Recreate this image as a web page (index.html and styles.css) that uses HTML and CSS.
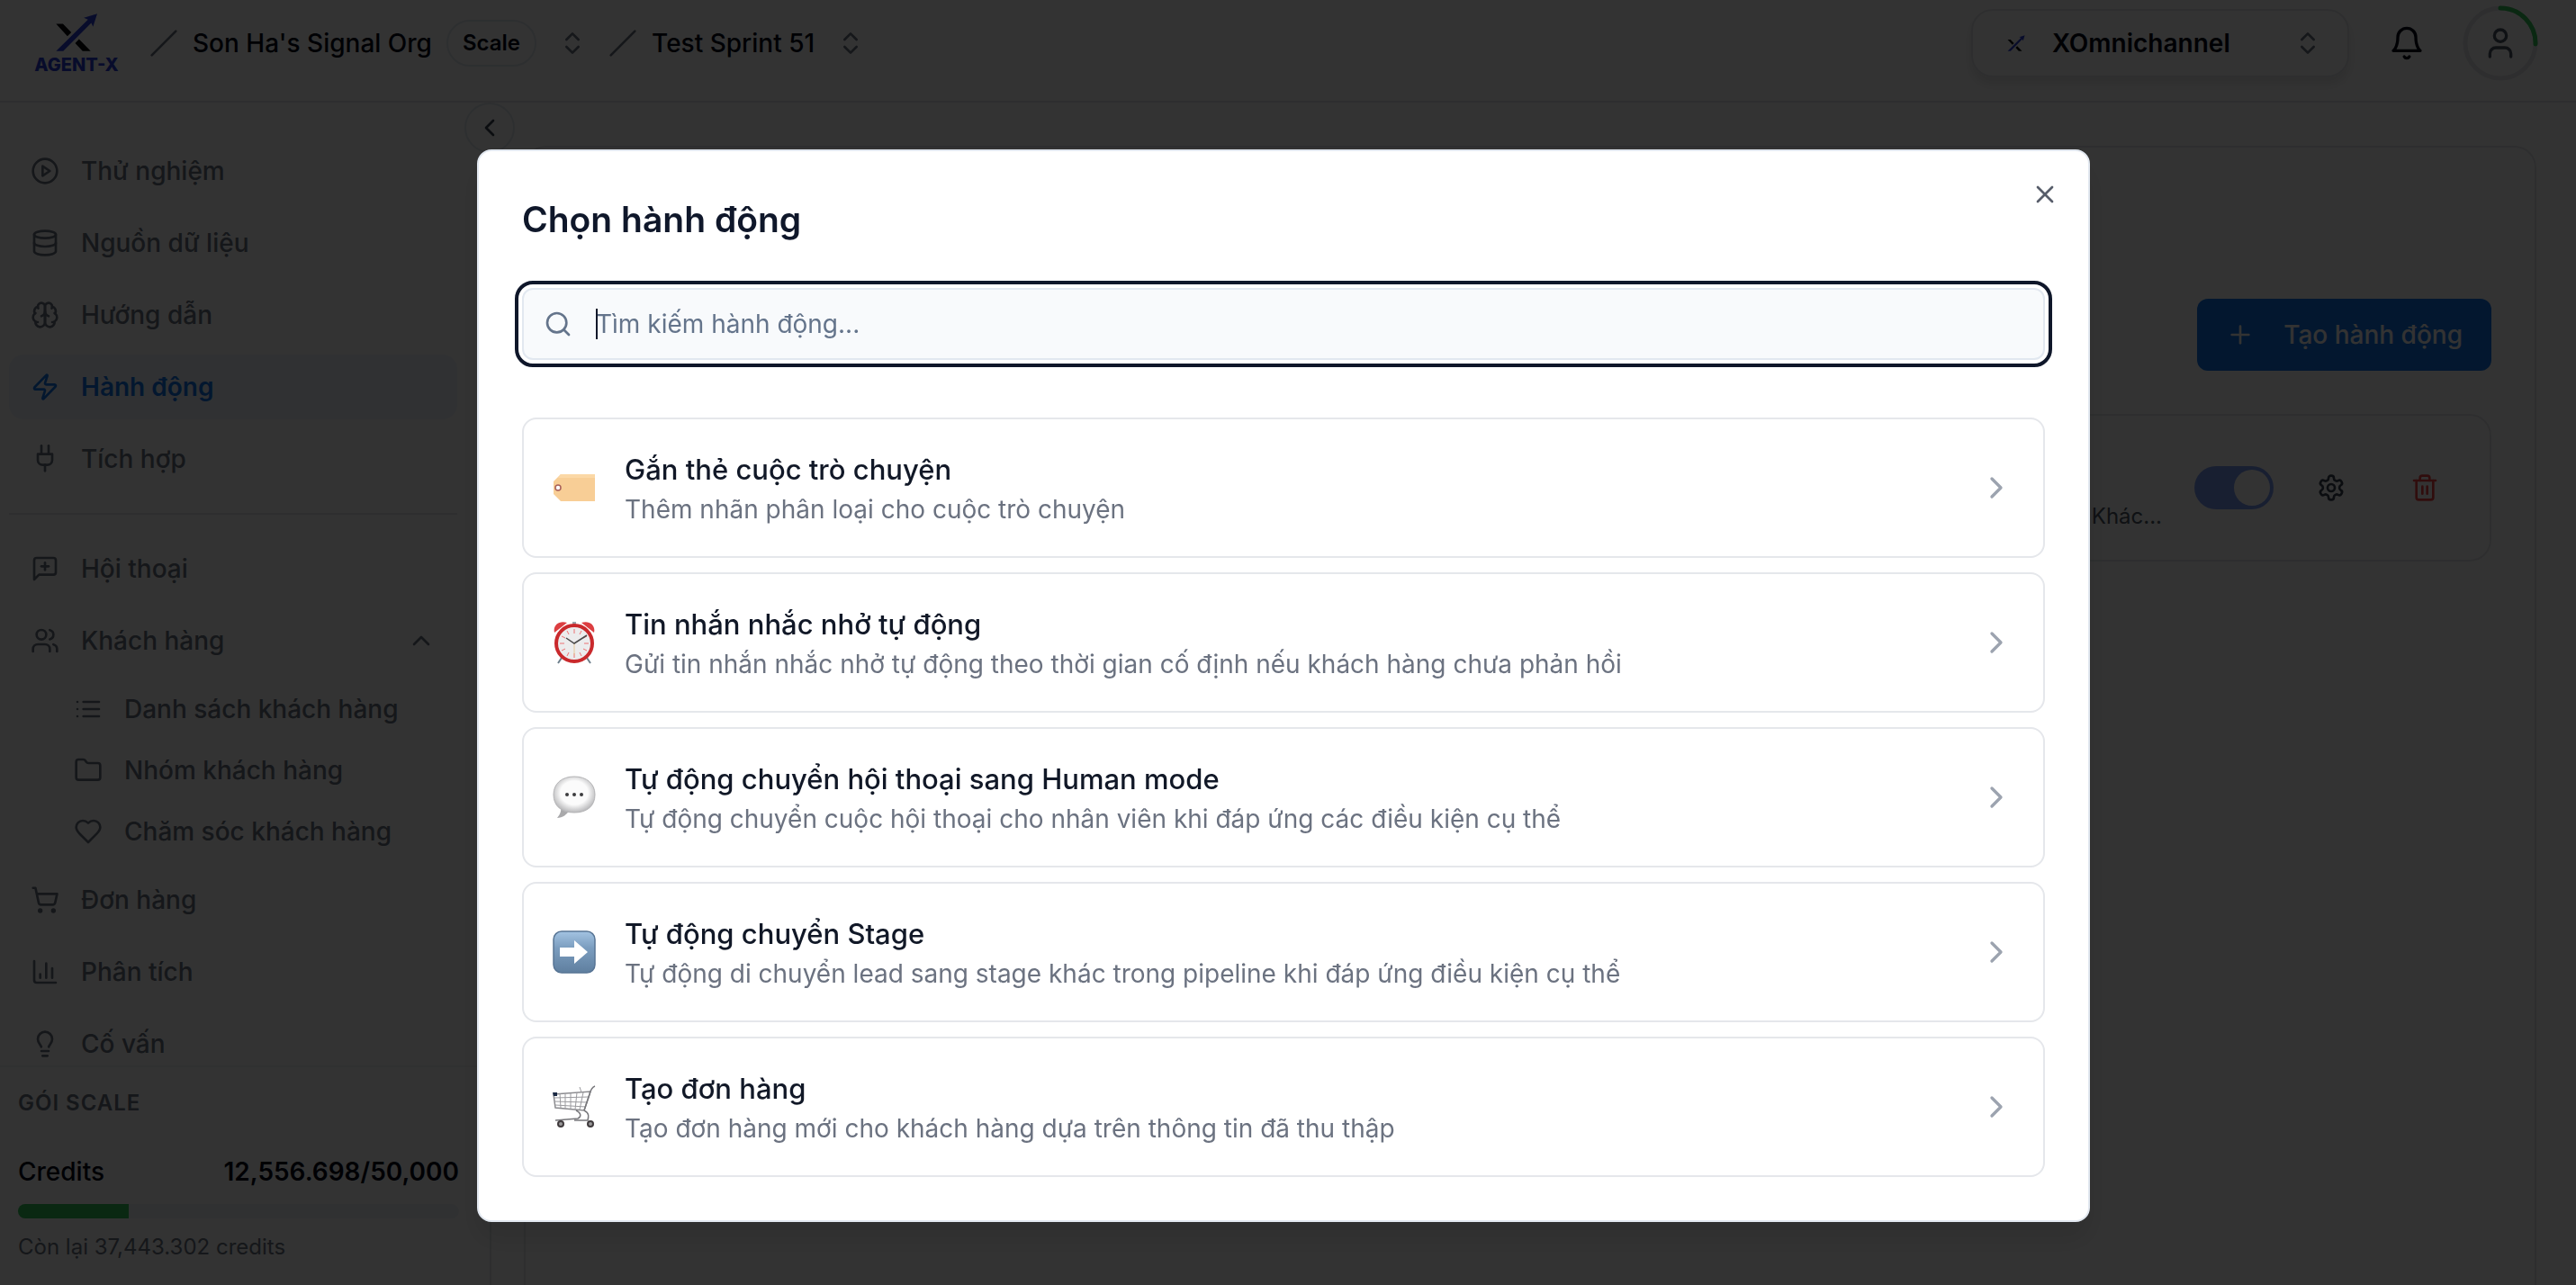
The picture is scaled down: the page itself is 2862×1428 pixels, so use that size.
FILE: index.html
```
<!DOCTYPE html>
<html lang="vi">
<head>
    <meta charset="UTF-8">
    <meta name="viewport" content="width=device-width, initial-scale=1.0">
    <title>Agent-X - Hành động</title>
    <link rel="stylesheet" href="styles.css">
</head>
<body>
    <!-- icon dùng chung -->
    <svg class="sprite" aria-hidden="true">
        <symbol id="i-x-logo" viewBox="105 45 145 132">
            <path d="M109 82h23l28 29-13 13zM186 134l39 40h-27l-25-27z" fill="#06080c"/>
            <path d="M109 174l107-106-14-6 45-14-14 44-6-13-94 95z" fill="#2b3fd6"/>
        </symbol>
        <symbol id="i-slash" viewBox="0 0 24 24"><path d="M22 2 2 22"/></symbol>
        <symbol id="i-updown" viewBox="0 0 24 24"><path d="m7 15 5 5 5-5"/><path d="m7 9 5-5 5 5"/></symbol>
        <symbol id="i-bell" viewBox="0 0 24 24"><path d="M6 8a6 6 0 0 1 12 0c0 7 3 9 3 9H3s3-2 3-9"/><path d="M10.3 21a1.94 1.94 0 0 0 3.4 0"/></symbol>
        <symbol id="i-user" viewBox="0 0 24 24"><path d="M19 21v-2a4 4 0 0 0-4-4H9a4 4 0 0 0-4 4v2"/><circle cx="12" cy="7" r="4"/></symbol>
        <symbol id="i-left" viewBox="0 0 24 24"><path d="m15 18-6-6 6-6"/></symbol>
        <symbol id="i-right" viewBox="0 0 24 24"><path d="m9 18 6-6-6-6"/></symbol>
        <symbol id="i-up" viewBox="0 0 24 24"><path d="m18 15-6-6-6 6"/></symbol>
        <symbol id="i-play" viewBox="0 0 24 24"><circle cx="12" cy="12" r="10"/><path d="m10 8 6 4-6 4z"/></symbol>
        <symbol id="i-database" viewBox="0 0 24 24"><ellipse cx="12" cy="5" rx="9" ry="3"/><path d="M3 5v14a9 3 0 0 0 18 0V5"/><path d="M3 12a9 3 0 0 0 18 0"/></symbol>
        <symbol id="i-brain" viewBox="0 0 24 24"><path d="M12 5a3 3 0 1 0-5.997.125 4 4 0 0 0-2.526 5.77 4 4 0 0 0 .556 6.588A4 4 0 1 0 12 18Z"/><path d="M12 5a3 3 0 1 1 5.997.125 4 4 0 0 1 2.526 5.77 4 4 0 0 1-.556 6.588A4 4 0 1 1 12 18Z"/><path d="M15 13a4.5 4.5 0 0 1-3-4 4.5 4.5 0 0 1-3 4"/><path d="M17.599 6.5a3 3 0 0 0 .399-1.375"/><path d="M6.003 5.125A3 3 0 0 0 6.401 6.5"/><path d="M3.477 10.896a4 4 0 0 1 .585-.396"/><path d="M19.938 10.5a4 4 0 0 1 .585.396"/><path d="M6 18a4 4 0 0 1-1.967-.516"/><path d="M19.967 17.484A4 4 0 0 1 18 18"/></symbol>
        <symbol id="i-zap" viewBox="0 0 24 24"><path d="M4 14a1 1 0 0 1-.78-1.63l9.9-10.2a.5.5 0 0 1 .86.46l-1.92 6.02A1 1 0 0 0 13 10h7a1 1 0 0 1 .78 1.63l-9.9 10.2a.5.5 0 0 1-.86-.46l1.92-6.02A1 1 0 0 0 11 14z"/></symbol>
        <symbol id="i-plug" viewBox="0 0 24 24"><path d="M12 22v-5"/><path d="M9 8V1"/><path d="M15 8V1"/><path d="M18 8v5a4 4 0 0 1-4 4h-4a4 4 0 0 1-4-4V8Z"/></symbol>
        <symbol id="i-message" viewBox="0 0 24 24"><path d="M21 15a2 2 0 0 1-2 2H7l-4 4V5a2 2 0 0 1 2-2h14a2 2 0 0 1 2 2z"/><path d="M12 7v6"/><path d="M9 10h6"/></symbol>
        <symbol id="i-users" viewBox="0 0 24 24"><path d="M16 21v-2a4 4 0 0 0-4-4H6a4 4 0 0 0-4 4v2"/><circle cx="9" cy="7" r="4"/><path d="M22 21v-2a4 4 0 0 0-3-3.87"/><path d="M16 3.13a4 4 0 0 1 0 7.75"/></symbol>
        <symbol id="i-list" viewBox="0 0 24 24"><path d="M3 12h.01"/><path d="M3 18h.01"/><path d="M3 6h.01"/><path d="M8 12h13"/><path d="M8 18h13"/><path d="M8 6h13"/></symbol>
        <symbol id="i-folder" viewBox="0 0 24 24"><path d="M20 20a2 2 0 0 0 2-2V8a2 2 0 0 0-2-2h-7.9a2 2 0 0 1-1.69-.9L9.6 3.9A2 2 0 0 0 7.93 3H4a2 2 0 0 0-2 2v13a2 2 0 0 0 2 2Z"/></symbol>
        <symbol id="i-heart" viewBox="0 0 24 24"><path d="M19 14c1.49-1.46 3-3.21 3-5.5A5.5 5.5 0 0 0 16.5 3c-1.76 0-3 .5-4.5 2-1.5-1.5-2.74-2-4.5-2A5.5 5.5 0 0 0 2 8.5c0 2.3 1.5 4.05 3 5.5l7 7Z"/></symbol>
        <symbol id="i-cart" viewBox="0 0 24 24"><circle cx="8" cy="21" r="1"/><circle cx="19" cy="21" r="1"/><path d="M2.05 2.05h2l2.66 12.42a2 2 0 0 0 2 1.58h9.78a2 2 0 0 0 1.95-1.57l1.65-7.43H5.12"/></symbol>
        <symbol id="i-chart" viewBox="0 0 24 24"><path d="M3 3v16a2 2 0 0 0 2 2h16"/><path d="M18 17V9"/><path d="M13 17V5"/><path d="M8 17v-3"/></symbol>
        <symbol id="i-bulb" viewBox="0 0 24 24"><path d="M9 18h6"/><path d="M10 22h4"/><path d="M8.9 14.5C8 12.5 6 11 6 8a6 6 0 0 1 12 0c0 3-2 4.5-2.9 6.5"/></symbol>
        <symbol id="i-plus" viewBox="0 0 24 24"><path d="M5 12h14"/><path d="M12 5v14"/></symbol>
        <symbol id="i-gear" viewBox="0 0 24 24"><path d="M12.22 2h-.44a2 2 0 0 0-2 2v.18a2 2 0 0 1-1 1.73l-.43.25a2 2 0 0 1-2 0l-.15-.08a2 2 0 0 0-2.73.73l-.22.38a2 2 0 0 0 .73 2.73l.15.1a2 2 0 0 1 1 1.72v.51a2 2 0 0 1-1 1.74l-.15.09a2 2 0 0 0-.73 2.73l.22.38a2 2 0 0 0 2.73.73l.15-.08a2 2 0 0 1 2 0l.43.25a2 2 0 0 1 1 1.73V20a2 2 0 0 0 2 2h.44a2 2 0 0 0 2-2v-.18a2 2 0 0 1 1-1.73l.43-.25a2 2 0 0 1 2 0l.15.08a2 2 0 0 0 2.73-.73l.22-.39a2 2 0 0 0-.73-2.73l-.15-.08a2 2 0 0 1-1-1.74v-.5a2 2 0 0 1 1-1.74l.15-.09a2 2 0 0 0 .73-2.73l-.22-.38a2 2 0 0 0-2.73-.73l-.15.08a2 2 0 0 1-2 0l-.43-.25a2 2 0 0 1-1-1.73V4a2 2 0 0 0-2-2z"/><circle cx="12" cy="12" r="3"/></symbol>
        <symbol id="i-trash" viewBox="0 0 24 24"><path d="M3 6h18"/><path d="M19 6v14a2 2 0 0 1-2 2H7a2 2 0 0 1-2-2V6"/><path d="M8 6V4a2 2 0 0 1 2-2h4a2 2 0 0 1 2 2v2"/><path d="M10 11v6"/><path d="M14 11v6"/></symbol>
        <symbol id="i-search" viewBox="0 0 24 24"><circle cx="11" cy="11" r="8"/><path d="m21 21-4.3-4.3"/></symbol>
        <symbol id="i-close" viewBox="0 0 24 24"><path d="M18 6 6 18"/><path d="m6 6 12 12"/></symbol>
    </svg>

    <div class="app">
        <header class="header">
            <a href="#" class="logo">
                <svg class="logo-mark"><use href="#i-x-logo"/></svg>
                <span class="logo-text">AGENT-X</span>
            </a>
            <svg class="icon muted"><use href="#i-slash"/></svg>
            <button class="switcher">Son Ha's Signal Org <span class="badge">Scale</span></button>
            <svg class="icon muted updown"><use href="#i-updown"/></svg>
            <svg class="icon muted"><use href="#i-slash"/></svg>
            <button class="switcher">Test Sprint 51</button>
            <svg class="icon muted updown"><use href="#i-updown"/></svg>

            <div class="header-right">
                <button class="channel">
                    <svg class="channel-logo"><use href="#i-x-logo"/></svg>
                    <span>XOmnichannel</span>
                    <svg class="icon muted"><use href="#i-updown"/></svg>
                </button>
                <button class="icon-button" aria-label="Thông báo"><svg class="icon large"><use href="#i-bell"/></svg></button>
                <button class="avatar" aria-label="Tài khoản">
                    <svg class="ring" viewBox="0 0 84 84">
                        <circle cx="42" cy="42" r="39" stroke="#e5e7eb"/>
                        <path d="M42 3a39 39 0 0 1 39 40" stroke="#34c759" stroke-linecap="round"/>
                    </svg>
                    <svg class="icon large"><use href="#i-user"/></svg>
                </button>
            </div>
        </header>

        <div class="body">
            <aside class="sidebar">
                <button class="collapse" aria-label="Thu gọn"><svg class="icon"><use href="#i-left"/></svg></button>
                <nav class="nav">
                    <a href="#" class="nav-item"><svg class="icon"><use href="#i-play"/></svg>Thử nghiệm</a>
                    <a href="#" class="nav-item"><svg class="icon"><use href="#i-database"/></svg>Nguồn dữ liệu</a>
                    <a href="#" class="nav-item"><svg class="icon"><use href="#i-brain"/></svg>Hướng dẫn</a>
                    <a href="#" class="nav-item active"><svg class="icon"><use href="#i-zap"/></svg>Hành động</a>
                    <a href="#" class="nav-item"><svg class="icon"><use href="#i-plug"/></svg>Tích hợp</a>
                    <hr>
                    <a href="#" class="nav-item"><svg class="icon"><use href="#i-message"/></svg>Hội thoại</a>
                    <a href="#" class="nav-item"><svg class="icon"><use href="#i-users"/></svg>Khách hàng<svg class="icon arrow"><use href="#i-up"/></svg></a>
                    <div class="subnav">
                        <a href="#" class="nav-item"><svg class="icon"><use href="#i-list"/></svg>Danh sách khách hàng</a>
                        <a href="#" class="nav-item"><svg class="icon"><use href="#i-folder"/></svg>Nhóm khách hàng</a>
                        <a href="#" class="nav-item"><svg class="icon"><use href="#i-heart"/></svg>Chăm sóc khách hàng</a>
                    </div>
                    <a href="#" class="nav-item"><svg class="icon"><use href="#i-cart"/></svg>Đơn hàng</a>
                    <a href="#" class="nav-item"><svg class="icon"><use href="#i-chart"/></svg>Phân tích</a>
                    <a href="#" class="nav-item"><svg class="icon"><use href="#i-bulb"/></svg>Cố vấn</a>
                </nav>
                <div class="plan">
                    <div class="plan-name">GÓI SCALE</div>
                    <div class="plan-row"><span>Credits</span><strong>12,556.698/50,000</strong></div>
                    <div class="bar"><div class="bar-fill" style="width: 25.1%"></div></div>
                    <div class="plan-left">Còn lại 37,443.302 credits</div>
                </div>
            </aside>

            <main class="main">
                <section class="panel">
                    <div class="toolbar">
                        <button class="create"><svg class="icon"><use href="#i-plus"/></svg>Tạo hành động</button>
                    </div>
                    <div class="rule">
                        <span class="rule-text">Khác...</span>
                        <input type="checkbox" class="toggle" aria-label="Bật hành động" checked>
                        <button class="icon-button rule-button" aria-label="Cài đặt"><svg class="icon"><use href="#i-gear"/></svg></button>
                        <button class="icon-button rule-button danger" aria-label="Xóa"><svg class="icon"><use href="#i-trash"/></svg></button>
                    </div>
                </section>
            </main>
        </div>
    </div>

    <div class="overlay">
        <div class="modal" role="dialog" aria-modal="true" aria-labelledby="modalTitle">
            <button class="close" aria-label="Đóng"><svg class="icon"><use href="#i-close"/></svg></button>
            <h2 id="modalTitle">Chọn hành động</h2>
            <div class="search">
                <svg class="icon"><use href="#i-search"/></svg>
                <input type="text" id="search" placeholder="Tìm kiếm hành động..." aria-label="Tìm kiếm hành động">
                <span class="caret"></span>
            </div>

            <div class="actions">
                <button class="action">
                    <svg class="emoji" viewBox="0 0 48 48">
                        <path d="M9 9h38v30H9l-8-8V17z" fill="#f8ce96"/>
                        <path d="M9 9h38v4H6z" fill="#fbd8a6"/>
                        <circle cx="6" cy="24" r="3" fill="#fff" stroke="#a9605a" stroke-width="1.5"/>
                    </svg>
                    <span class="action-text">
                        <span class="action-title">Gắn thẻ cuộc trò chuyện</span>
                        <span class="action-desc">Thêm nhãn phân loại cho cuộc trò chuyện</span>
                    </span>
                    <svg class="icon large chevron"><use href="#i-right"/></svg>
                </button>
                <button class="action">
                    <svg class="emoji" viewBox="0 0 48 48">
                        <path d="m10 41-4 6M38 41l4 6" stroke="#6d7f8c" stroke-width="2"/>
                        <path d="M24 1v5" stroke="#9aa4ab" stroke-width="4"/>
                        <path d="M2 13C0 5 7-1 16 2zM46 13C48 5 41-1 32 2z" fill="#dc3e41"/>
                        <circle cx="24" cy="25" r="20" fill="#ececed" stroke="#c9292c" stroke-width="4"/>
                        <path d="M24 9v5M24 36v5M8 25h5M35 25h5M16 11l2 4M32 11l-2 4M10 17l4 2M38 17l-4 2M10 33l4-2M38 33l-4-2M16 39l2-4M32 39l-2-4" stroke="#ec7274" stroke-width="1"/>
                        <path d="M24 25v13" stroke="#e5c89a" stroke-width="1"/>
                        <path d="m15 19 9 6 14-9" fill="none" stroke="#4a4a4a" stroke-width="1.5"/>
                    </svg>
                    <span class="action-text">
                        <span class="action-title">Tin nhắn nhắc nhở tự động</span>
                        <span class="action-desc">Gửi tin nhắn nhắc nhở tự động theo thời gian cố định nếu khách hàng chưa phản hồi</span>
                    </span>
                    <svg class="icon large chevron"><use href="#i-right"/></svg>
                </button>
                <button class="action">
                    <svg class="emoji" viewBox="0 0 48 48">
                        <defs>
                            <radialGradient id="bubble" cx=".5" cy=".45" r=".55"><stop offset=".6" stop-color="#fbfbfb"/><stop offset="1" stop-color="#b9b9bb"/></radialGradient>
                        </defs>
                        <path d="M9 34c1 6-1 9-4 13 6 0 11-4 14-9z" fill="#a9a9ab"/>
                        <path d="M24 1c14 0 23 8 23 20 0 13-9 20-23 20S1 34 1 21C1 9 10 1 24 1z" fill="url(#bubble)" stroke="#b5b5b7"/>
                        <circle cx="16" cy="21" r="2" fill="#3c3c3e"/><circle cx="24" cy="21" r="2" fill="#3c3c3e"/><circle cx="32" cy="21" r="2" fill="#3c3c3e"/>
                    </svg>
                    <span class="action-text">
                        <span class="action-title">Tự động chuyển hội thoại sang Human mode</span>
                        <span class="action-desc">Tự động chuyển cuộc hội thoại cho nhân viên khi đáp ứng các điều kiện cụ thể</span>
                    </span>
                    <svg class="icon large chevron"><use href="#i-right"/></svg>
                </button>
                <button class="action">
                    <svg class="emoji" viewBox="0 0 48 48">
                        <defs>
                            <linearGradient id="tile" x2="0" y2="1"><stop offset="0" stop-color="#a3c3e2"/><stop offset=".4" stop-color="#7b9dbf"/><stop offset="1" stop-color="#5f7f9f"/></linearGradient>
                        </defs>
                        <rect x="1" y="1" width="46" height="46" rx="9" fill="url(#tile)" stroke="#587595" stroke-width="1.5"/>
                        <path d="M8 19h16v-8l15 13-15 13v-8H8z" fill="#fff"/>
                    </svg>
                    <span class="action-text">
                        <span class="action-title">Tự động chuyển Stage</span>
                        <span class="action-desc">Tự động di chuyển lead sang stage khác trong pipeline khi đáp ứng điều kiện cụ thể</span>
                    </span>
                    <svg class="icon large chevron"><use href="#i-right"/></svg>
                </button>
                <button class="action">
                    <svg class="emoji" viewBox="0 0 48 48" fill="none">
                        <path d="m1 10 41-3-7 21-32-3z" stroke="#8a8a8e" stroke-width="1.5"/>
                        <path d="m2 14 38-1M2 18l37 1M3 22l34 2M8 9l1 16M14 9v17M20 9v17M27 8l-2 19M34 8l-4 19" stroke="#9b9b9f"/>
                        <path d="m30 2 2 6" stroke="#9b9b9f"/>
                        <path d="M47 1c-3 1-5 5-6 9l-6 18M26 28c6 3 6 7 2 9L3 39M35 28c6 3 5 7 4 11H24" stroke="#77777b" stroke-width="1.5"/>
                        <path d="M0 8h5v4H1z" fill="#1c2b45"/>
                        <circle cx="9" cy="43" r="3" fill="#999" stroke="#3f3a3c" stroke-width="2"/>
                        <circle cx="42" cy="43" r="3" fill="#999" stroke="#3f3a3c" stroke-width="2"/>
                    </svg>
                    <span class="action-text">
                        <span class="action-title">Tạo đơn hàng</span>
                        <span class="action-desc">Tạo đơn hàng mới cho khách hàng dựa trên thông tin đã thu thập</span>
                    </span>
                    <svg class="icon large chevron"><use href="#i-right"/></svg>
                </button>
            </div>
        </div>
    </div>
</body>
</html>
```
FILE: styles.css
```
* {
    box-sizing: border-box;
}

body {
    margin: 0;
    background-color: #fff;
    color: #020817;
    font-family: Inter, "Noto Sans", sans-serif;
    font-size: 28px;
    line-height: 40px;
    overflow: hidden;
}

button {
    padding: 0;
    border: none;
    background: none;
    color: inherit;
    font: inherit;
    cursor: pointer;
}

a {
    color: inherit;
    text-decoration: none;
}

.sprite {
    display: none;
}

.icon {
    flex: none;
    width: 32px;
    height: 32px;
    fill: none;
    stroke: currentColor;
    stroke-width: 2;
    stroke-linecap: round;
    stroke-linejoin: round;
}

.icon.large {
    width: 40px;
    height: 40px;
}

.muted {
    color: #6b7280;
}

.app {
    display: flex;
    flex-direction: column;
    height: 100vh;
}

/* header */
.header {
    display: flex;
    align-items: center;
    height: 114px;
    padding: 0 42px 16px 40px;
    border-bottom: 2px solid #e5e7eb;
    font-weight: 500;
}

.logo {
    display: flex;
    flex-direction: column;
    align-items: center;
    gap: 4px;
    width: 90px;
    margin-right: 36px;
}

.logo-mark {
    width: 48px;
    height: 44px;
}

.logo-text {
    color: #2b3fd6;
    font-size: 20px;
    font-weight: 800;
    line-height: 20px;
    white-space: nowrap;
}

.switcher {
    display: flex;
    align-items: center;
    gap: 16px;
    margin-left: 16px;
}

.badge {
    padding: 4px 16px;
    border: 2px solid #e2e8f0;
    border-radius: 26px;
    font-size: 24px;
    font-weight: 600;
}

.updown {
    margin: 0 24px;
}

.header-right {
    display: flex;
    align-items: center;
    margin-left: auto;
}

.channel {
    display: flex;
    align-items: center;
    width: 420px;
    height: 76px;
    margin-right: 44px;
    padding: 0 28px 0 38px;
    border: 2px solid #e5e7eb;
    border-radius: 24px;
    box-shadow: 0 8px 12px rgba(0, 0, 0, 0.1);
    font-weight: 600;
}

.channel-logo {
    width: 20px;
    height: 20px;
    margin-right: 30px;
}

.channel .icon {
    margin-left: auto;
}

.icon-button {
    display: flex;
    align-items: center;
    justify-content: center;
}

.avatar {
    display: flex;
    align-items: center;
    justify-content: center;
    position: relative;
    width: 84px;
    height: 84px;
    margin-left: 42px;
    color: #4b5563;
}

.ring {
    position: absolute;
    inset: 0;
    fill: none;
    stroke-width: 5;
}

.body {
    display: flex;
    flex: 1;
    min-height: 0;
}

/* sidebar */
.sidebar {
    display: flex;
    flex-direction: column;
    position: relative;
    flex: none;
    width: 546px;
    border-right: 2px solid #e5e7eb;
}

.collapse {
    display: flex;
    align-items: center;
    justify-content: center;
    position: absolute;
    top: 0;
    right: -28px;
    width: 56px;
    height: 56px;
    border: 2px solid #e2e8f0;
    border-radius: 50%;
    background-color: #fff;
    color: #374151;
}

.nav {
    flex: 1;
    min-height: 0;
    overflow: hidden;
    padding: 40px 36px 0 10px;
    color: #6b7280;
    font-weight: 500;
}

.nav-item {
    display: flex;
    align-items: center;
    gap: 24px;
    height: 72px;
    margin-bottom: 8px;
    padding: 0 24px;
    border-radius: 16px;
}

.nav-item.active {
    background-color: #f0f5fc;
    color: #1275eb;
    font-weight: 600;
}

.nav hr {
    height: 2px;
    margin: 24px 0;
    border: none;
    background-color: #e5e7eb;
}

.arrow {
    margin-left: auto;
}

.subnav {
    margin: 8px 0;
    padding-left: 48px;
}

.subnav .nav-item {
    height: 64px;
    margin-bottom: 4px;
}

.plan {
    padding: 24px 34px 26px 20px;
    border-top: 2px solid #f1f3f5;
}

.plan-name {
    color: #6b7280;
    font-size: 24px;
    font-weight: 600;
    letter-spacing: 1px;
    line-height: 32px;
}

.plan-row {
    display: flex;
    justify-content: space-between;
    margin: 40px 0 16px;
    font-weight: 500;
}

.plan-row strong {
    font-weight: 600;
}

.bar {
    height: 16px;
    margin-bottom: 16px;
    overflow: hidden;
    border-radius: 8px;
    background-color: #f1f5f9;
}

.bar-fill {
    height: 100%;
    background-color: #34c759;
}

.plan-left {
    color: #6b7280;
    font-size: 24px;
    line-height: 32px;
}

/* main */
.main {
    display: flex;
    flex: 1;
    padding: 48px 44px 0 36px;
}

.panel {
    flex: 1;
    padding: 168px 48px 48px;
    border: 2px solid #e5e7eb;
    border-bottom: none;
    border-radius: 24px 24px 0 0;
}

.toolbar {
    display: flex;
    justify-content: flex-end;
    margin-bottom: 48px;
}

.create {
    display: flex;
    align-items: center;
    gap: 32px;
    height: 80px;
    padding: 0 32px;
    border-radius: 12px;
    background-color: #1275eb;
    color: #fff;
    font-weight: 500;
}

.rule {
    display: flex;
    align-items: center;
    justify-content: flex-end;
    gap: 24px;
    height: 164px;
    padding: 32px;
    border: 2px solid #e5e7eb;
    border-radius: 24px;
}

.rule-text {
    align-self: flex-end;
    margin-right: 12px;
    color: #4b5563;
    font-size: 24px;
    line-height: 32px;
}

.rule-button {
    width: 80px;
    height: 80px;
    color: #374151;
}

.rule-button.danger {
    color: #ef4444;
}

.toggle {
    appearance: none;
    width: 88px;
    height: 48px;
    margin: 0;
    padding: 4px;
    border-radius: 24px;
    background-color: #7b9bf3;
}

.toggle::before {
    content: "";
    display: block;
    width: 40px;
    height: 40px;
    border-radius: 50%;
    background-color: #fff;
}

.toggle:checked::before {
    margin-left: auto;
}

/* modal */
.overlay {
    display: flex;
    align-items: center;
    justify-content: center;
    position: fixed;
    inset: 0;
    padding: 96px 10px 0 0;
    background-color: rgba(0, 0, 0, 0.8);
}

.modal {
    position: relative;
    width: 90%;
    max-width: 1792px;
    padding: 48px;
    border: 2px solid #e2e8f0;
    border-radius: 16px;
    background-color: #fff;
    box-shadow: 0 20px 30px rgba(0, 0, 0, 0.1);
}

.modal h2 {
    margin: 0 0 48px;
    color: #0f172a;
    font-size: 39px;
    font-weight: 600;
    line-height: 56px;
}

.close {
    display: flex;
    position: absolute;
    top: 32px;
    right: 32px;
    color: #575d6a;
}

.search {
    position: relative;
    margin-bottom: 64px;
}

.search input {
    display: block;
    width: 100%;
    height: 80px;
    padding: 0 24px 0 80px;
    border: 2px solid #e2e8f0;
    border-radius: 12px;
    outline: 4px solid #0f172a;
    outline-offset: 4px;
    background-color: #f8fafc;
    color: #0f172a;
    font: inherit;
}

.search input::placeholder {
    color: #64748b;
    opacity: 1;
}

.search .icon {
    position: absolute;
    top: 24px;
    left: 24px;
    color: #64748b;
}

.caret {
    position: absolute;
    top: 23px;
    left: 82px;
    width: 2px;
    height: 34px;
    background-color: #0f172a;
}

.actions {
    display: flex;
    flex-direction: column;
    gap: 16px;
}

.action {
    display: flex;
    align-items: center;
    gap: 32px;
    padding: 32px;
    border: 2px solid #e5e7eb;
    border-radius: 16px;
    text-align: left;
}

.action:hover {
    background-color: #f9fafb;
}

.emoji {
    flex: none;
    width: 48px;
    height: 48px;
}

.action-text {
    display: flex;
    flex: 1;
    flex-direction: column;
}

.action-title {
    color: #111827;
    font-size: 31px;
    font-weight: 500;
    line-height: 48px;
}

.action-desc {
    color: #6b7280;
}

.chevron {
    color: #9ca3af;
}
```
